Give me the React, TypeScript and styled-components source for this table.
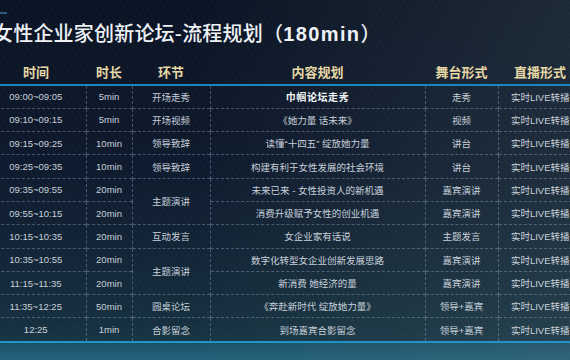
import styled, { createGlobalStyle } from 'styled-components';

const GlobalStyle = createGlobalStyle`
  html, body {
    margin: 0;
    padding: 0;
  }
  body {
    font-family: "Liberation Sans", "Noto Sans CJK SC", sans-serif;
  }
`;

const Page = styled.div`
  position: relative;
  width: 570px;
  height: 360px;
  overflow: hidden;
  background:
    repeating-linear-gradient(
      62deg,
      rgba(255, 255, 255, 0.02) 0 1px,
      transparent 1px 5px
    ),
    linear-gradient(90deg, rgba(80, 110, 115, 0) 35%, rgba(90, 115, 118, 0.22) 100%),
    linear-gradient(
      180deg,
      #0b1424 0%,
      #0e1a2d 45%,
      #122536 70%,
      #16303f 90%,
      #183646 95%,
      #1c5169 95.3%,
      #23627b 100%
    );
`;

const Accent = styled.div`
  margin-top: 12px;
  width: 7px;
  height: 2px;
  background: #2b5d7c;
`;

const Title = styled.h1`
  margin: 7px 0 0 -7px;
  font-family: "Noto Sans CJK SC", sans-serif;
  font-size: 20px;
  line-height: 24px;
  font-weight: 500;
  color: #eef2f6;
  letter-spacing: 0.2px;
  white-space: nowrap;
`;

const Minutes = styled.span`
  font-family: "Liberation Sans", sans-serif;
  font-weight: 700;
  letter-spacing: 1.4px;
`;

const TableWrap = styled.div`
  margin: 13px 0 0 -14px;
  width: 596px;
  border-bottom: 2px solid #2194c6;
`;

const Table = styled.table`
  width: 100%;
  border-collapse: collapse;
  table-layout: fixed;
`;

const HeadCell = styled.th<{ $w: number }>`
  width: ${(p) => p.$w}px;
  height: 25px;
  padding: 0;
  font-family: "Noto Sans CJK SC", sans-serif;
  font-size: 13px;
  font-weight: 700;
  color: #e7d8a6;
  text-align: center;
  border-bottom: 2px solid #1a88c0;
`;

const Row = styled.tr`
  height: 23.3px;
  & + & td {
    border-top: 1px dashed rgba(150, 168, 190, 0.42);
  }
`;

const Cell = styled.td<{ $strong?: boolean }>`
  padding: 0;
  text-align: center;
  vertical-align: middle;
  font-size: ${(p) => (p.$strong ? '10px' : '9.5px')};
  font-weight: ${(p) => (p.$strong ? 700 : 400)};
  letter-spacing: ${(p) => (p.$strong ? '0.6px' : '0')};
  color: ${(p) => (p.$strong ? '#f6f8fa' : '#c8d0da')};
  white-space: nowrap;
  & + & {
    border-left: 1px dashed rgba(150, 168, 190, 0.42);
  }
`;

const columns = [
  { title: '时间', w: 100 },
  { title: '时长', w: 46 },
  { title: '环节', w: 78 },
  { title: '内容规划', w: 215 },
  { title: '舞台形式', w: 73 },
  { title: '直播形式', w: 84 },
];

type Item = {
  time: string;
  len: string;
  part?: string;
  span?: number;
  content: string;
  stage: string;
  strong?: boolean;
};

const rows: Item[] = [
  { time: '09:00~09:05', len: '5min', part: '开场走秀', content: '巾帼论坛走秀', stage: '走秀', strong: true },
  { time: '09:10~09:15', len: '5min', part: '开场视频', content: '《她力量 话未来》', stage: '视频' },
  { time: '09:15~09:25', len: '10min', part: '领导致辞', content: '读懂“十四五” 绽放她力量', stage: '讲台' },
  { time: '09:25~09:35', len: '10min', part: '领导致辞', content: '构建有利于女性发展的社会环境', stage: '讲台' },
  { time: '09:35~09:55', len: '20min', part: '主题演讲', span: 2, content: '未来已来 - 女性投资人的新机遇', stage: '嘉宾演讲' },
  { time: '09:55~10:15', len: '20min', content: '消费升级赋予女性的创业机遇', stage: '嘉宾演讲' },
  { time: '10:15~10:35', len: '20min', part: '互动发言', content: '女企业家有话说', stage: '主题发言' },
  { time: '10:35~10:55', len: '20min', part: '主题演讲', span: 2, content: '数字化转型女企业创新发展思路', stage: '嘉宾演讲' },
  { time: '11:15~11:35', len: '20min', content: '新消费 她经济的量', stage: '嘉宾演讲' },
  { time: '11:35~12:25', len: '50min', part: '圆桌论坛', content: '《奔赴新时代 绽放她力量》', stage: '领导+嘉宾' },
  { time: '12:25', len: '1min', part: '合影留念', content: '到场嘉宾合影留念', stage: '领导+嘉宾' },
];

export default function App() {
  return (
    <>
      <GlobalStyle />
      <Page>
        <Accent />
        <Title>
          女性企业家创新论坛-流程规划（<Minutes>180min</Minutes>）
        </Title>
        <TableWrap>
          <Table>
            <thead>
              <tr>
                {columns.map((c) => (
                  <HeadCell key={c.title} $w={c.w}>
                    {c.title}
                  </HeadCell>
                ))}
              </tr>
            </thead>
            <tbody>
              {rows.map((r) => (
                <Row key={r.time}>
                  <Cell>{r.time}</Cell>
                  <Cell>{r.len}</Cell>
                  {r.part && <Cell rowSpan={r.span}>{r.part}</Cell>}
                  <Cell $strong={r.strong}>{r.content}</Cell>
                  <Cell>{r.stage}</Cell>
                  <Cell>实时LIVE转播</Cell>
                </Row>
              ))}
            </tbody>
          </Table>
        </TableWrap>
      </Page>
    </>
  );
}
